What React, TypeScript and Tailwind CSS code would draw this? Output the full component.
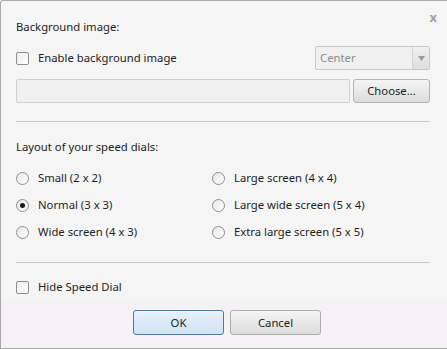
import React from "react";

const font = { fontFamily: '"Noto Sans", "Open Sans", sans-serif' };

const CheckBox = ({ label }: { label: string }) => (
  <label className="flex h-4 items-center gap-[9px]">
    <span className="block h-[13px] w-[13px] rounded-[2px] border border-[#8f8f8f] bg-gradient-to-br from-[#ececec] to-white" />
    <span>{label}</span>
  </label>
);

const Radio = ({ label, checked }: { label: string; checked?: boolean }) => (
  <div className="flex h-[27px] items-center gap-[9px]">
    <span className="flex h-[13px] w-[13px] items-center justify-center rounded-full border border-[#8f8f8f] bg-gradient-to-br from-[#e6e6e6] to-white">
      {checked && <span className="block h-[5px] w-[5px] rounded-full bg-[#1c1c1c]" />}
    </span>
    <span>{label}</span>
  </div>
);

export default function App() {
  return (
    <div
      style={font}
      className="relative flex h-[349px] w-[447px] flex-col overflow-hidden rounded-tl-[3px] border border-r-0 border-[#a9a9a9] bg-[#f5f5f5] text-[11.3px] text-[#1e1e1e]"
    >
      <button className="absolute right-[10px] top-[10px] text-[13px] font-bold leading-none text-[#a0a0a0]">
        x
      </button>

      <div className="flex flex-col pl-[15px] pr-[17px]">
        <div className="mt-[18px] h-4 leading-4">Background image:</div>

        <div className="mt-[11px] flex h-6 items-center justify-between">
          <CheckBox label="Enable background image" />
          <div className="flex h-6 w-[115px] rounded-[2px] border border-[#c9c9c9] bg-[#f0f0f0]">
            <span className="flex-1 pl-[4px] leading-[22px] text-[#8c8c8c]">Center</span>
            <span className="flex w-[17px] items-center justify-center border-l border-[#d4d4d4] bg-gradient-to-b from-[#f0f0f0] to-[#dedede]">
              <svg width="7" height="5" viewBox="0 0 7 5">
                <path d="M0 0 H7 L3.5 5 Z" fill="#9a9a9a" />
              </svg>
            </span>
          </div>
        </div>

        <div className="mt-[9px] flex h-6 gap-[3px]">
          <div className="flex-1 rounded-[2px] border border-[#d0d0d0] bg-[#f0f0f0]" />
          <button className="w-[77px] rounded-[3px] border border-[#b5b5b5] bg-gradient-to-b from-[#f5f5f5] to-[#dcdcdc] leading-[22px]">
            Choose...
          </button>
        </div>

        <div className="mt-[18px] h-px bg-[#c8c8c8]" />

        <div className="mt-[17px] h-4 leading-4">Layout of your speed dials:</div>

        <div className="mt-[10px] grid grid-cols-[196px_1fr]">
          <div className="flex flex-col">
            <Radio label="Small (2 x 2)" />
            <Radio label="Normal (3 x 3)" checked />
            <Radio label="Wide screen (4 x 3)" />
          </div>
          <div className="flex flex-col">
            <Radio label="Large screen (4 x 4)" />
            <Radio label="Large wide screen (5 x 4)" />
            <Radio label="Extra large screen (5 x 5)" />
          </div>
        </div>

        <div className="mt-[16px] h-px bg-[#c8c8c8]" />

        <div className="mt-[16px]">
          <CheckBox label="Hide Speed Dial" />
        </div>
      </div>

      <div className="mt-[4px] flex flex-1 gap-[6px] bg-[#f4f2f4] pl-[132px] pt-[11px]">
        <button className="h-[25px] w-[91px] rounded-[3px] border border-[#3c7fb1] bg-gradient-to-b from-[#e8f2fb] to-[#cfe2f3] leading-[23px]">
          OK
        </button>
        <button className="h-[25px] w-[91px] rounded-[3px] border border-[#acacac] bg-gradient-to-b from-[#f5f5f5] to-[#dcdcdc] leading-[23px]">
          Cancel
        </button>
      </div>
    </div>
  );
}
